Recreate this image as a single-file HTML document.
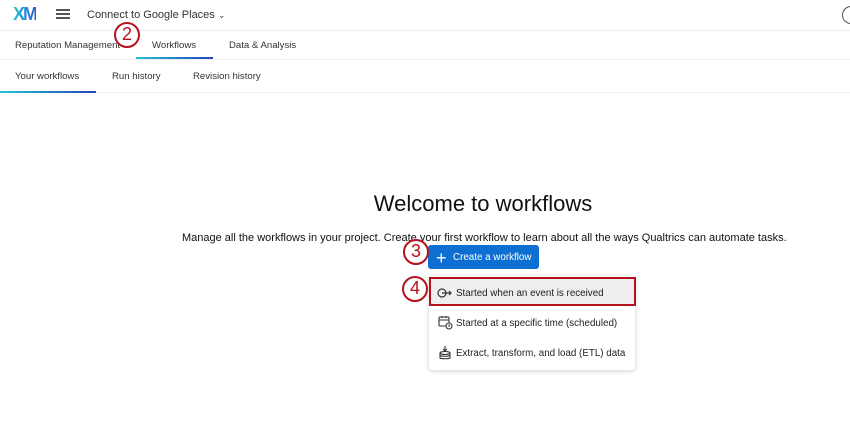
<!DOCTYPE html>
<html><head><style>
*{margin:0;padding:0;box-sizing:border-box}
body{width:850px;height:425px;background:#fff;font-family:"Liberation Sans",sans-serif;color:#1a1a1a;position:relative;overflow:hidden}
.a{position:absolute;white-space:nowrap}
.c{position:absolute;width:26px;height:26px;border:2.5px solid #b5121b;border-radius:50%;background:#fff;color:#b5121b;font-size:18px;text-align:center;line-height:21px}
.t{font-size:9.6px;color:#333}
.d{font-size:9.8px;color:#222}
</style></head><body>
<div class="a" style="left:13px;top:4px;font-size:18px;font-weight:bold;letter-spacing:-2px;background:linear-gradient(90deg,#21c5d9,#2b58d8);-webkit-background-clip:text;color:transparent">XM</div>
<div class="a" style="left:56px;top:9px;width:14px;height:2px;background:#555;box-shadow:0 4px 0 #555,0 8px 0 #555"></div>
<div class="a" style="left:87px;top:9px;font-size:11px;color:#333">Connect to Google Places <span style="font-size:9px">&#8964;</span></div>
<div class="a" style="left:842px;top:6px;width:18px;height:18px;border:1.5px solid #555;border-radius:50%"></div>
<div class="a" style="left:0;top:30px;width:850px;height:1px;background:#eee"></div>
<div class="a t" style="left:15px;top:40px">Reputation Management</div>
<div class="a t" style="left:152px;top:40px">Workflows</div>
<div class="a" style="left:136px;top:57px;width:77px;height:2px;background:linear-gradient(90deg,#1fc3d8,#2743b8)"></div>
<div class="a t" style="left:229px;top:40px">Data &amp; Analysis</div>
<div class="a" style="left:0;top:59px;width:850px;height:1px;background:#eee"></div>
<div class="a t" style="left:15px;top:71px">Your workflows</div>
<div class="a t" style="left:112px;top:71px">Run history</div>
<div class="a t" style="left:193px;top:71px">Revision history</div>
<div class="a" style="left:0;top:92px;width:850px;height:1px;background:#eee"></div>
<div class="a" style="left:0;top:91px;width:96px;height:2px;background:linear-gradient(90deg,#1fc3d8,#2743b8)"></div>
<div class="c" style="left:114px;top:22px">2</div>
<div class="a" style="left:0;width:966px;top:191px;text-align:center;font-size:22px;color:#111">Welcome to workflows</div>
<div class="a" style="left:182px;top:232px;font-size:11px;color:#111">Manage all the workflows in your project. Create your first workflow to learn about all the ways Qualtrics can automate tasks.</div>
<div class="a" style="left:428px;top:245px;width:111px;height:24px;background:#0c6fd1;border-radius:3px;color:#fff;font-size:9.8px;line-height:24px;padding-left:25px;padding-top:1px">Create a workflow</div>
<div class="a" style="left:436px;top:251px;color:#fff;font-size:18px;line-height:14px">+</div>
<div class="c" style="left:403px;top:239px">3</div>
<div class="a" style="left:429px;top:276px;width:206px;height:94px;background:#fff;border-radius:3px;box-shadow:0 1px 5px rgba(0,0,0,.2)"></div>
<div class="a" style="left:429px;top:277px;width:207px;height:29px;background:#eee;border:2.5px solid #b5121b"></div>
<svg class="a" style="left:437px;top:287px" width="16" height="12" viewBox="0 0 16 12" fill="none" stroke="#333" stroke-width="1.2"><circle cx="5" cy="6" r="4"/><path d="M5 6h9M12 4l2 2-2 2"/></svg>
<div class="a d" style="left:456px;top:288px">Started when an event is received</div>
<svg class="a" style="left:438px;top:315px" width="15" height="15" viewBox="0 0 15 15" fill="none" stroke="#333" stroke-width="1.1"><rect x="1" y="2" width="10" height="9" rx="1"/><path d="M1 5h10M4 1v2M8 1v2"/><circle cx="11" cy="11" r="3" fill="#fff"/><path d="M11 9.5v1.5h1.2"/></svg>
<div class="a d" style="left:456px;top:318px">Started at a specific time (scheduled)</div>
<svg class="a" style="left:438px;top:345px" width="14" height="15" viewBox="0 0 14 15" fill="none" stroke="#333" stroke-width="1.1"><path d="M7 1v5M5 4l2 2 2-2"/><ellipse cx="7" cy="8" rx="5" ry="1.5"/><path d="M2 8v5c0 1 10 1 10 0V8M2 10.5c0 1 10 1 10 0"/></svg>
<div class="a d" style="left:456px;top:348px">Extract, transform, and load (ETL) data</div>
<div class="c" style="left:402px;top:276px">4</div>
</body></html>
